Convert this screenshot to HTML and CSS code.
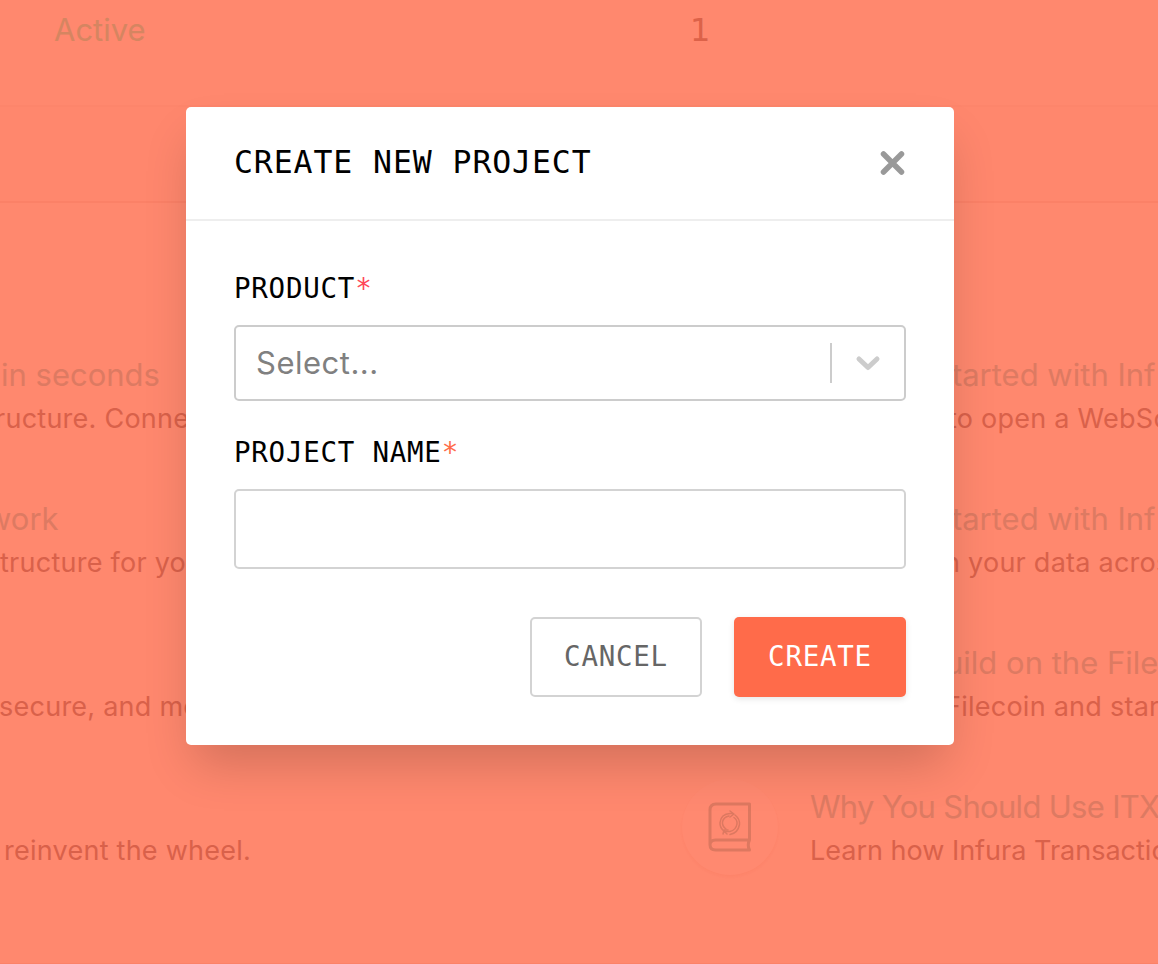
FILE: index.html
```html
<!DOCTYPE html>
<html lang="en">
<head>
<meta charset="UTF-8" />
<meta name="viewport" content="width=device-width, initial-scale=1.0" />
<title>Create New Project</title>
<link rel="stylesheet" href="styles.css">
</head>
<body>

<div class="page">
    <div class="status-row">
        <span class="status">Active</span>
        <span class="count">1</span>
    </div>
    <div class="empty-row"></div>

    <div class="resources">
        <div class="column left">
            <div class="item">
                <div class="item-text">
                    <h3 class="l1">in seconds</h3>
                    <p class="l2">ructure. Conne</p>
                </div>
            </div>
            <div class="item">
                <div class="item-text">
                    <h3 class="l3">work</h3>
                    <p class="l4">tructure for you</p>
                </div>
            </div>
            <div class="item">
                <div class="item-text">
                    <h3>&nbsp;</h3>
                    <p class="l5">secure, and mo</p>
                </div>
            </div>
            <div class="item">
                <div class="item-text">
                    <h3>&nbsp;</h3>
                    <p class="l6">reinvent the wheel.</p>
                </div>
            </div>
        </div>

        <div class="column right">
            <div class="item">
                <div class="circle"></div>
                <div class="item-text">
                    <h3 class="r1">Started with Inf</h3>
                    <p class="r2">to open a WebSo</p>
                </div>
            </div>
            <div class="item">
                <div class="circle"></div>
                <div class="item-text">
                    <h3 class="r1">Started with Inf</h3>
                    <p class="r4">n your data acros</p>
                </div>
            </div>
            <div class="item">
                <div class="circle"></div>
                <div class="item-text">
                    <h3 class="r5">uild on the File</h3>
                    <p class="r6">Filecoin and star</p>
                </div>
            </div>
            <div class="item">
                <div class="circle">
                    <svg class="book" width="44" height="50" viewBox="0 0 44 50" fill="none" stroke="currentColor" stroke-width="3" stroke-linecap="round" stroke-linejoin="round">
                        <path d="M41.5 37.5V2H8Q2 2 2 8V42.5Q2 48 7.500 48H41.500Q39 43 41.500 38H7.500Q2 38 2 43"/>
                        <g stroke-width="1.500">
                            <path d="M17 30Q11.500 26 12 20.500Q13 12 22 11.500H25M22 9L26 12L22 15"/>
                            <path d="M18 27Q14 24 14.500 20Q15.500 15 21 14"/>
                            <path d="M27 13Q32 17 31.500 22.500Q30 31 22 32.500M20 28H16L15 32M16 29L19 32"/>
                            <path d="M26 15.500Q29.500 18 29 22Q28 28 22 29.500H17"/>
                        </g>
                    </svg>
                </div>
                <div class="item-text">
                    <h3 class="r7">Why You Should Use ITX</h3>
                    <p class="r8">Learn how Infura Transactio</p>
                </div>
            </div>
        </div>
    </div>
    <div class="page-end"></div>
</div>

<div class="overlay">
    <div class="modal">
        <div class="modal-header">
            <h2>CREATE NEW PROJECT</h2>
            <button class="close" aria-label="Close">
                <svg width="26" height="26" viewBox="0 0 26 26" fill="none" stroke="currentColor" stroke-width="5.500" stroke-linecap="round">
                    <path d="M3.500 4L21.500 22M21.500 4L3.500 22"/>
                </svg>
            </button>
        </div>
        <form class="modal-body">
            <label class="label">PRODUCT<span class="star red">*</span></label>
            <div class="select">
                <span class="placeholder">Select...</span>
                <span class="separator"></span>
                <svg class="chevron" width="26" height="16" viewBox="0 0 26 16" fill="none" stroke="currentColor" stroke-width="5" stroke-linecap="round" stroke-linejoin="round">
                    <path d="M4 4L13 12.500L22 4"/>
                </svg>
            </div>

            <label class="label" for="name">PROJECT NAME<span class="star">*</span></label>
            <input class="input" type="text" id="name">

            <div class="buttons">
                <button type="button" class="btn cancel">CANCEL</button>
                <button type="button" class="btn create">CREATE</button>
            </div>
        </form>
    </div>
</div>

</body>
</html>
```
FILE: styles.css
```css
* {
    box-sizing: border-box;
}

body {
    margin: 0;
    height: 964px;
    overflow: hidden;
    background: #ff886e;
    font-family: Inter, "Liberation Sans", sans-serif;
}

h2, h3, p {
    margin: 0;
    font-weight: 400;
}

/* page behind the modal */
.page {
    height: 964px;
    overflow: hidden;
    display: flex;
    flex-direction: column;
}

.status-row {
    display: flex;
    height: 105px;
    padding-left: 54px;
    font-size: 31px;
    line-height: 60px;
}

.status {
    width: 636px;
    color: #d58561;
}

.count {
    color: #dc6249;
    font-family: "DejaVu Sans", sans-serif;
    font-size: 32px;
}

.empty-row {
    height: 98px;
    border-top: 2px solid #fd856b;
    border-bottom: 2px solid #fb8167;
    background: #ff876d;
}

.resources {
    display: flex;
    padding-top: 144px;
    flex: 1;
}

.page-end {
    height: 1px;
    background: #fb8268;
}

.column {
    display: flex;
    flex-direction: column;
    gap: 48px;
    white-space: nowrap;
}

.left {
    flex: none;
    width: 682px;
}

.item {
    display: flex;
    gap: 32px;
    height: 96px;
}

.item-text {
    padding-top: 6px;
}

.item h3 {
    font-size: 31px;
    line-height: 43px;
    color: #dd7a62;
}

.item p {
    font-size: 27px;
    line-height: 46px;
    letter-spacing: 0.25px;
    color: #d9614a;
}

.l1 { margin-left: 1px; }
.l2 { margin-left: -5px; }
.l3 { margin-left: -14px; }
.l5 { margin-left: -1px; }
.l6 { margin-left: 4px; }
.r1 { margin-left: 122px; }
.r2 { margin-left: 138px; }
.r4 { margin-left: 134px; }
.r5 { margin-left: 135px; }
.r6 { margin-left: 135px; }

.item .r7 {
    letter-spacing: -0.7px;
}

.item .r8 {
    letter-spacing: 0;
}

.circle {
    display: flex;
    flex: none;
    align-items: center;
    justify-content: center;
    width: 96px;
    height: 96px;
    border-radius: 50%;
    background: #ff8970;
    box-shadow: 0 2px 3px rgba(200, 60, 30, 0.04);
}

.book {
    color: #dd7860;
}

/* modal */
.overlay {
    position: absolute;
    inset: 0;
    padding: 107px 0 0 186px;
}

.modal {
    width: 768px;
    height: 638px;
    background: #fff;
    border-radius: 5px;
    box-shadow: 0 26px 46px -8px rgba(0, 0, 0, 0.18);
}

.modal-header {
    display: flex;
    justify-content: space-between;
    align-items: center;
    height: 114px;
    padding: 0 48px;
    border-bottom: 2px solid #eee;
}

.modal-header h2 {
    padding-bottom: 2px;
    font-family: "DejaVu Sans Mono", monospace;
    font-size: 31.5px;
    letter-spacing: 0.9px;
    color: #000;
}

.close {
    display: flex;
    padding: 0;
    border: none;
    background: none;
    color: #999;
    cursor: pointer;
}

.modal-body {
    padding: 48px;
}

.label {
    display: block;
    height: 38px;
    margin-bottom: 18px;
    font-family: "DejaVu Sans Mono", monospace;
    font-size: 27.5px;
    line-height: 38px;
    letter-spacing: 0.75px;
    color: #000;
}

.star {
    color: #ff6b4a;
}

.red {
    color: #ff4858;
}

.select {
    display: flex;
    align-items: center;
    height: 76px;
    margin-bottom: 32px;
    padding: 0 23px 0 20px;
    border: 2px solid #ccc;
    border-radius: 5px;
}

.placeholder {
    flex: 1;
    padding-bottom: 2px;
    font-size: 31px;
    letter-spacing: 0.5px;
    color: #808080;
}

.separator {
    width: 2px;
    height: 40px;
    margin-right: 23px;
    background: #ccc;
}

.chevron {
    color: #ccc;
}

.input {
    display: block;
    width: 100%;
    height: 80px;
    padding: 0 20px;
    border: 2px solid #d3d3d3;
    border-radius: 5px;
    background: #fff;
    font-size: 31px;
}

.buttons {
    display: flex;
    justify-content: flex-end;
    gap: 32px;
    margin-top: 48px;
}

.btn {
    width: 172px;
    height: 80px;
    padding: 0 0 2px;
    border: 2px solid #d3d3d3;
    border-radius: 5px;
    background: #fff;
    font-family: "DejaVu Sans Mono", monospace;
    font-size: 27.5px;
    letter-spacing: 0.75px;
    color: #666;
    cursor: pointer;
}

.create {
    border: none;
    background: #ff6b4a;
    color: #fff;
    box-shadow: 0 2px 6px rgba(0, 0, 0, 0.1);
}
```
